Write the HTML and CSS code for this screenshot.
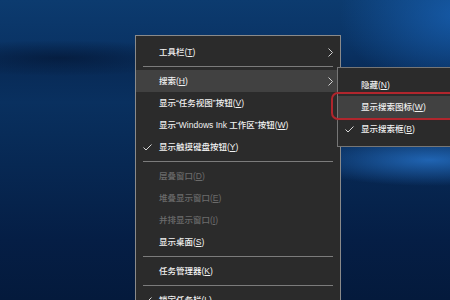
FILE: index.html
```html
<!DOCTYPE html>
<html lang="zh-CN">
<head>
<meta charset="utf-8">
<link rel="stylesheet" href="styles.css">
</head>
<body>
<div class="desktop">
  <div class="menu main">
    <div class="item"><span>工具栏(<u>T</u>)</span><svg class="arrow" width="5" height="9" viewBox="0 0 5 9"><polyline points="0.5,0.5 4.5,4.5 0.5,8.5" fill="none" stroke="#d0d0d0" stroke-width="1"/></svg></div>
    <div class="sep"></div>
    <div class="item hover"><span>搜索(<u>H</u>)</span><svg class="arrow" width="5" height="9" viewBox="0 0 5 9"><polyline points="0.5,0.5 4.5,4.5 0.5,8.5" fill="none" stroke="#d0d0d0" stroke-width="1"/></svg></div>
    <div class="item"><span>显示“任务视图”按钮(<u>V</u>)</span></div>
    <div class="item"><span>显示“Windows Ink 工作区”按钮(<u>W</u>)</span></div>
    <div class="item"><svg class="check" width="9" height="7" viewBox="0 0 9 7"><polyline points="0.5,3.5 3,6 8.5,0.5" fill="none" stroke="#d8d8d8" stroke-width="1"/></svg><span>显示触摸键盘按钮(<u>Y</u>)</span></div>
    <div class="sep"></div>
    <div class="item disabled"><span>层叠窗口(<u>D</u>)</span></div>
    <div class="item disabled"><span>堆叠显示窗口(<u>E</u>)</span></div>
    <div class="item disabled"><span>并排显示窗口(<u>I</u>)</span></div>
    <div class="item"><span>显示桌面(<u>S</u>)</span></div>
    <div class="sep"></div>
    <div class="item"><span>任务管理器(<u>K</u>)</span></div>
    <div class="sep"></div>
    <div class="item"><svg class="check" width="9" height="7" viewBox="0 0 9 7"><polyline points="0.5,3.5 3,6 8.5,0.5" fill="none" stroke="#d8d8d8" stroke-width="1"/></svg><span>锁定任务栏(<u>L</u>)</span></div>
  </div>
  <div class="menu sub">
    <div class="item"><span>隐藏(<u>N</u>)</span></div>
    <div class="item hover"><span>显示搜索图标(<u>W</u>)</span></div>
    <div class="item"><svg class="check" width="9" height="7" viewBox="0 0 9 7"><polyline points="0.5,3.5 3,6 8.5,0.5" fill="none" stroke="#d8d8d8" stroke-width="1"/></svg><span>显示搜索框(<u>B</u>)</span></div>
  </div>
  <div class="ring"></div>
</div>
</body>
</html>
```
FILE: styles.css
```css
html, body {
  margin: 0;
  padding: 0;
}
body {
  width: 450px;
  height: 300px;
  overflow: hidden;
  font-family: "Liberation Sans", "Noto Sans CJK SC", sans-serif;
  font-size: 8.5px;
  font-weight: 500;
}
.desktop {
  position: relative;
  width: 450px;
  height: 300px;
  overflow: hidden;
  background:
    radial-gradient(ellipse 130px 26px at 430px 160px, rgba(40, 120, 210, 0.75), rgba(30, 100, 190, 0) 100%),
    radial-gradient(ellipse 120px 80px at 460px 15px, rgba(25, 100, 185, 0.75), rgba(25, 100, 185, 0) 100%),
    radial-gradient(ellipse 140px 18px at 60px 58px, rgba(3, 18, 45, 0.6), rgba(3, 18, 45, 0) 100%),
    linear-gradient(180deg, #0c3b6f 0%, #0a3466 14%, #082b58 24%, #09305f 34%, #072853 55%, #051e45 80%, #041a3c 100%);
}
.menu {
  position: absolute;
  background: #2b2b2b;
  border: 1px solid #8a8a8a;
  color: #f2f2f2;
}
.main {
  left: 135px;
  top: 35px;
  width: 204px;
  padding: 5px 0 20px;
}
.sub {
  left: 337px;
  top: 67px;
  width: 140px;
  padding: 6px 0;
  border-color: #767676;
}
.item {
  position: relative;
  height: 22px;
  line-height: 22px;
  padding-left: 23px;
  display: flex;
  align-items: center;
  white-space: nowrap;
}
.item u {
  text-decoration: underline;
  text-underline-offset: 1px;
}
.hover {
  background: #414141;
}
.disabled {
  color: #6b6b6b;
}
.arrow {
  position: absolute;
  right: 7px;
  top: 7px;
}
.check {
  position: absolute;
  left: 7px;
  top: 8px;
}
.sep {
  height: 1px;
  margin: 3px 7px;
  background: #7c7c7c;
}
.ring {
  position: absolute;
  left: 331px;
  top: 92px;
  width: 140px;
  height: 24px;
  border: 2px solid #b0262d;
  border-radius: 7px;
  box-shadow: 0 0 1px rgba(120, 20, 25, 0.8);
}
```
